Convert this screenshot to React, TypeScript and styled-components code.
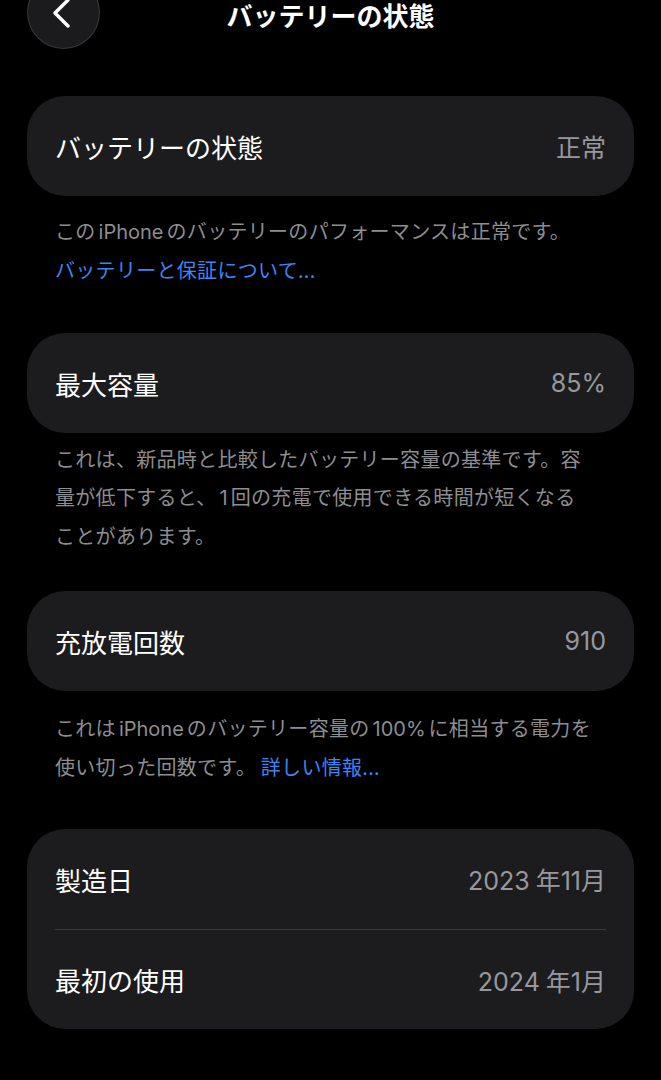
import React from "react";
import styled, { createGlobalStyle } from "styled-components";

const GlobalStyle = createGlobalStyle`
  html, body {
    margin: 0;
    padding: 0;
    background: #000;
  }
  body {
    font-family: Inter, "Noto Sans CJK JP", sans-serif;
    color: #fff;
    -webkit-font-smoothing: antialiased;
  }
`;

const Page = styled.div`
  width: 661px;
  min-height: 1080px;
  background: #000;
  overflow: hidden;
`;

const Header = styled.header`
  display: grid;
  grid-template-columns: 1fr auto 1fr;
  align-items: start;
  height: 49px;
  padding: 0 27px;
`;

const BackButton = styled.button`
  width: 73px;
  height: 73px;
  margin-top: -24px;
  border-radius: 50%;
  background: #1b1b1d;
  border: 1px solid rgba(255, 255, 255, 0.13);
  display: flex;
  align-items: center;
  justify-content: center;
  padding: 0 4px 0 0;
  cursor: pointer;
`;

const Title = styled.h1`
  margin: 2px 0 0;
  font-family: "Noto Sans CJK JP", sans-serif;
  font-size: 26px;
  font-weight: 700;
  line-height: 26px;
  color: #fff;
  text-align: center;
`;

const Content = styled.main`
  padding: 0 27px;
  display: flex;
  flex-direction: column;
`;

const Card = styled.section<{ $top: number }>`
  margin-top: ${(p) => p.$top}px;
  background: #1c1c1e;
  border-radius: 38px;
  padding: 0 28px;
`;

const Row = styled.div`
  height: 100px;
  display: flex;
  align-items: center;
  justify-content: space-between;
  & + & {
    border-top: 1px solid #3a3a3c;
    height: 99px;
  }
`;

const Label = styled.span`
  font-family: "Noto Sans CJK JP", sans-serif;
  font-size: 26px;
  color: #fff;
`;

const Value = styled.span`
  font-family: Inter, "Noto Sans CJK JP", sans-serif;
  font-size: 25px;
  color: #98989e;
`;

const Num = styled.span<{ $gap: number }>`
  margin-right: ${(p) => p.$gap}px;
`;

const Footer = styled.p<{ $top: number }>`
  margin: ${(p) => p.$top}px 0 0;
  padding: 0 28px;
  font-family: "Noto Sans CJK JP", sans-serif;
  font-size: 20px;
  line-height: 38px;
  letter-spacing: 0.3px;
  color: #8d8d92;
`;

const Latin = styled.span`
  font-family: Inter, sans-serif;
  letter-spacing: 0;
  margin: 0 3px;
`;

const Link = styled.a`
  color: #3c85f5;
  text-decoration: none;
`;

const ChevronLeft = () => (
  <svg width="22" height="32" viewBox="0 0 22 32" fill="none">
    <path
      d="M17 3 L4 16 L17 29"
      stroke="#fff"
      strokeWidth="3.4"
      strokeLinecap="round"
      strokeLinejoin="round"
    />
  </svg>
);

export default function App() {
  return (
    <Page>
      <GlobalStyle />
      <Header>
        <BackButton aria-label="戻る">
          <ChevronLeft />
        </BackButton>
        <Title>バッテリーの状態</Title>
        <span />
      </Header>

      <Content>
        <Card $top={47}>
          <Row>
            <Label>バッテリーの状態</Label>
            <Value>正常</Value>
          </Row>
        </Card>
        <Footer $top={16}>
          この<Latin>iPhone</Latin>のバッテリーのパフォーマンスは正常です。
          <br />
          <Link href="#">バッテリーと保証について...</Link>
        </Footer>

        <Card $top={44}>
          <Row>
            <Label>最大容量</Label>
            <Value>85%</Value>
          </Row>
        </Card>
        <Footer $top={7}>
          これは、新品時と比較したバッテリー容量の基準です。容
          <br />
          量が低下すると、<Latin>1</Latin>回の充電で使用できる時間が短くなる
          <br />
          ことがあります。
        </Footer>

        <Card $top={36}>
          <Row>
            <Label>充放電回数</Label>
            <Value>910</Value>
          </Row>
        </Card>
        <Footer $top={18}>
          これは<Latin>iPhone</Latin>のバッテリー容量の<Latin>100%</Latin>に相当する電力を
          <br />
          使い切った回数です。 <Link href="#">詳しい情報...</Link>
        </Footer>

        <Card $top={43}>
          <Row>
            <Label>製造日</Label>
            <Value>
              <Num $gap={6}>2023</Num>年<Num $gap={0}>11</Num>月
            </Value>
          </Row>
          <Row>
            <Label>最初の使用</Label>
            <Value>
              <Num $gap={6}>2024</Num>年<Num $gap={0}>1</Num>月
            </Value>
          </Row>
        </Card>
      </Content>
    </Page>
  );
}
